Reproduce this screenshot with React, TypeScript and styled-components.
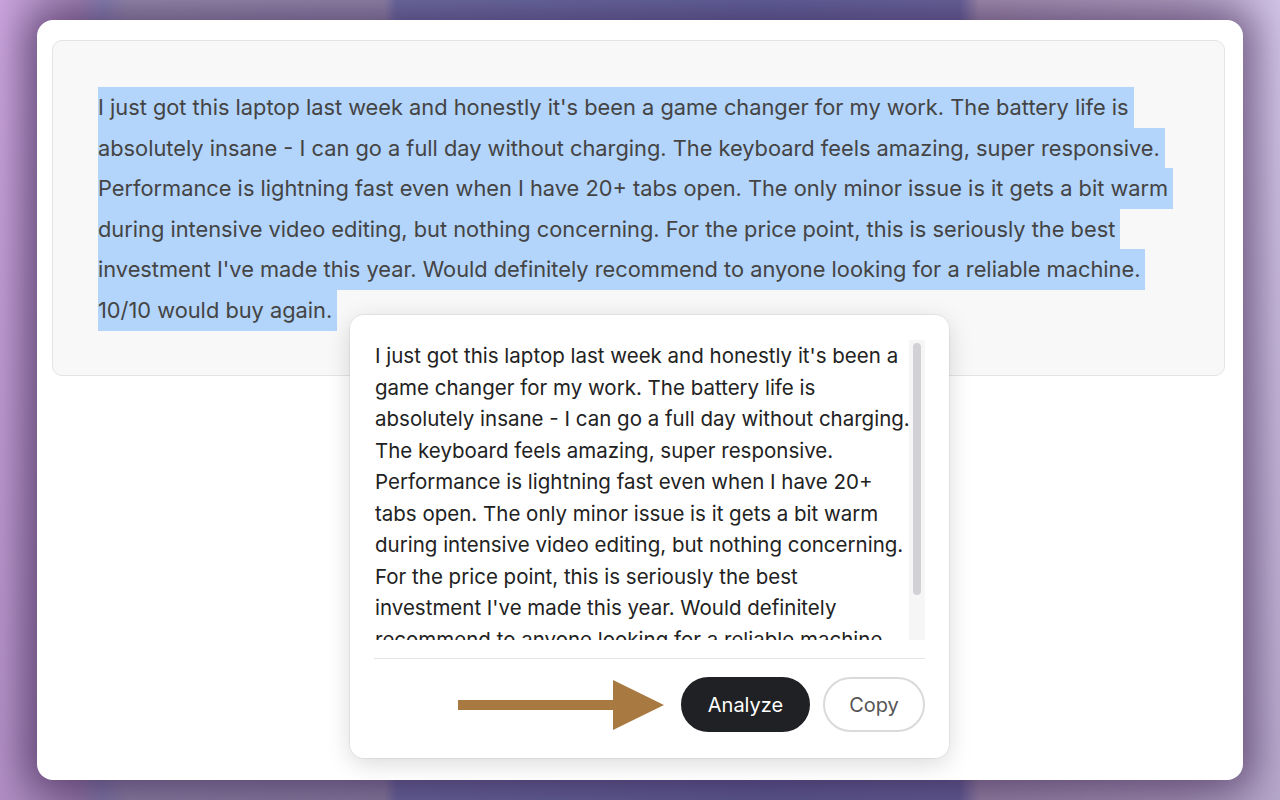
import styled, { createGlobalStyle } from 'styled-components';

const GlobalStyle = createGlobalStyle`
  html, body {
    margin: 0;
    padding: 0;
    height: 800px;
    overflow: hidden;
  }
  body {
    font-family: Inter, 'Liberation Sans', Arial, sans-serif;
    background:
      linear-gradient(180deg, rgba(0, 0, 0, 0) 0%, rgba(40, 20, 60, 0.15) 100%),
      linear-gradient(
        90deg,
        #c9a4dc 0%,
        #a587b8 6%,
        #8c88b8 8%,
        #9a91b2 10%,
        #958cae 30%,
        #7072a8 31%,
        #6466a0 60%,
        #6b6aa2 75%,
        #a795b4 76.5%,
        #b4a3c4 92%,
        #d0c2e4 100%
      );
  }
`;

const Window = styled.div`
  position: relative;
  box-sizing: border-box;
  margin: 20px 37px 0 37px;
  height: 760px;
  padding: 20px 18px 20px 15px;
  background: #ffffff;
  border-radius: 16px;
  box-shadow: 0 0 36px 12px rgba(55, 30, 75, 0.55);
`;

const ReviewPanel = styled.div`
  box-sizing: border-box;
  height: 336px;
  padding: 46px 40px 0 45px;
  background: #f8f8f8;
  border: 1px solid #e4e4e4;
  border-radius: 10px;
`;

const ReviewText = styled.div`
  font-size: 21.8px;
  line-height: 40.6px;
  color: #444444;
`;

const SelectedLine = styled.span`
  display: block;
  width: fit-content;
  padding-right: 5px;
  background: #b3d4fb;
  white-space: nowrap;
`;

const Popover = styled.div`
  position: absolute;
  left: 313px;
  top: 295px;
  box-sizing: border-box;
  width: 599px;
  height: 443px;
  padding: 25px 24px 24px 25px;
  display: flex;
  flex-direction: column;
  background: #ffffff;
  border-radius: 14px;
  box-shadow: 0 6px 24px rgba(0, 0, 0, 0.15), 0 0 0 1px rgba(0, 0, 0, 0.05);
`;

const ScrollArea = styled.div`
  display: flex;
  height: 300px;
`;

const ScrollContent = styled.div`
  flex: 1;
  overflow: hidden;
  font-size: 20.5px;
  line-height: 31.55px;
  color: #222222;
`;

const WrappedLine = styled.span`
  display: block;
  white-space: nowrap;
`;

const ScrollTrack = styled.div`
  flex: none;
  box-sizing: border-box;
  width: 16px;
  padding: 3px 4px;
  background: #f6f6f7;
`;

const ScrollThumb = styled.div`
  height: 252px;
  border-radius: 4px;
  background: #d2d2d6;
`;

const Divider = styled.hr`
  margin: 18px 0 0 -1px;
  border: none;
  border-top: 1px solid #e4e4e9;
`;

const Footer = styled.div`
  display: flex;
  align-items: center;
  justify-content: flex-end;
  margin-top: 18px;
`;

const Pointer = styled.svg`
  flex: none;
  margin-right: 17px;
`;

const PillButton = styled.button<{ $primary?: boolean }>`
  box-sizing: border-box;
  width: ${({ $primary }) => ($primary ? '129px' : '102px')};
  height: 55px;
  padding: 0;
  margin-left: ${({ $primary }) => ($primary ? '0' : '13px')};
  font-family: Inter, 'Liberation Sans', Arial, sans-serif;
  font-size: 20px;
  border-radius: 28px;
  cursor: pointer;
  color: ${({ $primary }) => ($primary ? '#ffffff' : '#555555')};
  background: ${({ $primary }) => ($primary ? '#202124' : '#ffffff')};
  border: ${({ $primary }) => ($primary ? '2px solid #202124' : '2px solid #dadada')};
`;

const reviewLines = [
  "I just got this laptop last week and honestly it's been a game changer for my work. The battery life is",
  'absolutely insane - I can go a full day without charging. The keyboard feels amazing, super responsive.',
  'Performance is lightning fast even when I have 20+ tabs open. The only minor issue is it gets a bit warm',
  'during intensive video editing, but nothing concerning. For the price point, this is seriously the best',
  "investment I've made this year. Would definitely recommend to anyone looking for a reliable machine.",
  '10/10 would buy again.',
];

// same review, broken the way the narrow popover wraps it
const popoverLines = [
  "I just got this laptop last week and honestly it's been a",
  'game changer for my work. The battery life is',
  'absolutely insane - I can go a full day without charging.',
  'The keyboard feels amazing, super responsive.',
  'Performance is lightning fast even when I have 20+',
  'tabs open. The only minor issue is it gets a bit warm',
  'during intensive video editing, but nothing concerning.',
  'For the price point, this is seriously the best',
  "investment I've made this year. Would definitely",
  'recommend to anyone looking for a reliable machine.',
  '10/10 would buy again.',
];

const App = () => {
  return (
    <>
      <GlobalStyle />
      <Window>
        <ReviewPanel>
          <ReviewText>
            {reviewLines.map((line) => (
              <SelectedLine key={line}>{line}</SelectedLine>
            ))}
          </ReviewText>
        </ReviewPanel>
        <Popover>
          <ScrollArea>
            <ScrollContent>
              {popoverLines.map((line) => (
                <WrappedLine key={line}>{line}</WrappedLine>
              ))}
            </ScrollContent>
            <ScrollTrack>
              <ScrollThumb />
            </ScrollTrack>
          </ScrollArea>
          <Divider />
          <Footer>
            <Pointer width="206" height="50" viewBox="0 0 206 50">
              <rect x="0" y="20" width="160" height="10" fill="#a87940" />
              <polygon points="155,0 206,25 155,50" fill="#a87940" />
            </Pointer>
            <PillButton $primary>Analyze</PillButton>
            <PillButton>Copy</PillButton>
          </Footer>
        </Popover>
      </Window>
    </>
  );
};

export default App;
